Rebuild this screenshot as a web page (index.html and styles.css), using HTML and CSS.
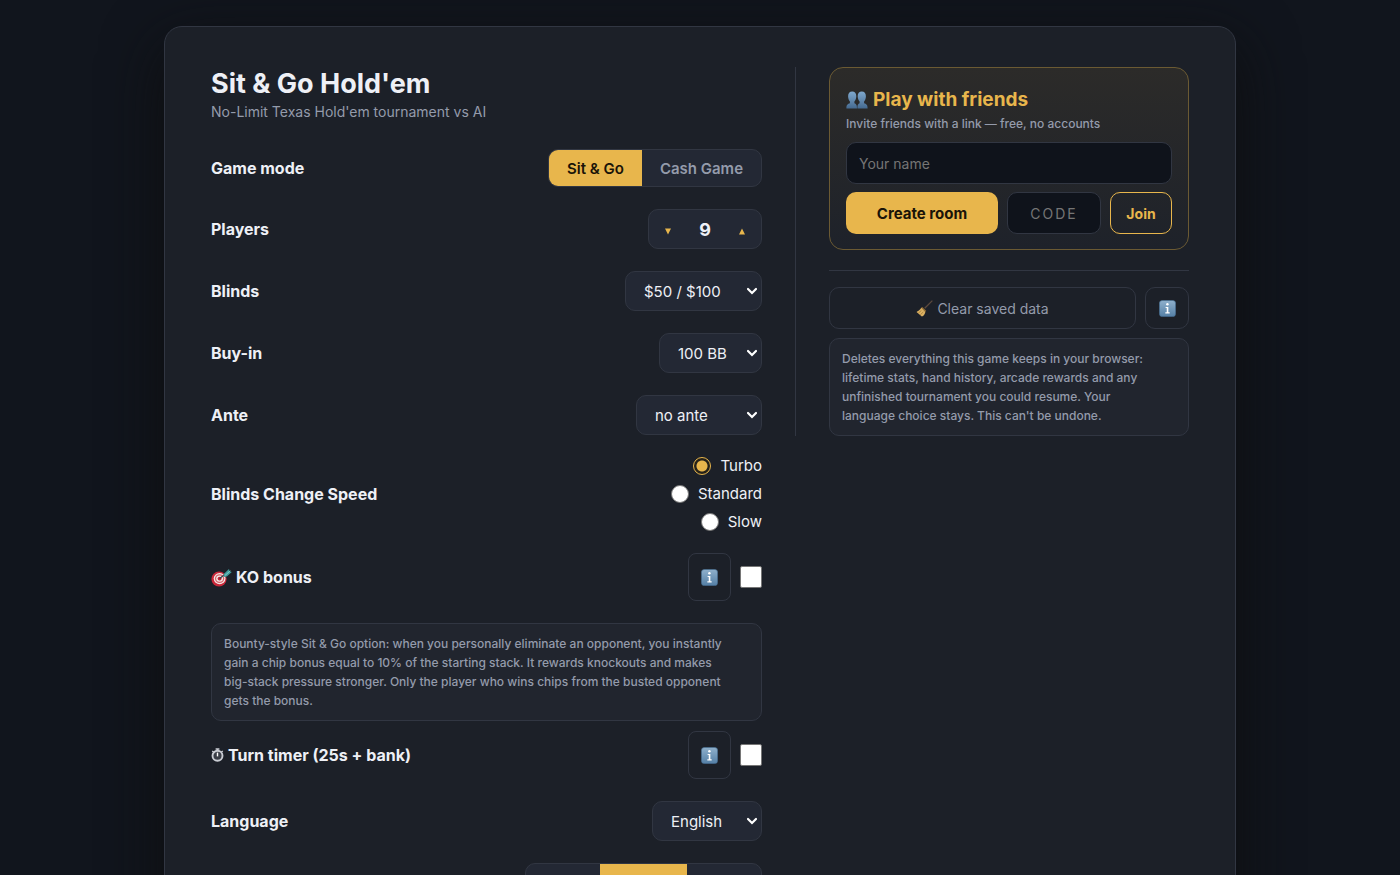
FILE: index.html
```html
<!DOCTYPE html>
<html lang="en">
<head>
    <meta charset="UTF-8">
    <meta name="viewport" content="width=device-width, initial-scale=1.0">
    <title>Sit &amp; Go Hold'em</title>
    <link rel="stylesheet" href="styles.css">
</head>
<body>
    <svg class="sprite" aria-hidden="true">
        <defs>
            <linearGradient id="info-fill" x1="0" y1="0" x2="0" y2="1">
                <stop offset="0" stop-color="#8fb0cc"/>
                <stop offset="1" stop-color="#5580a6"/>
            </linearGradient>
            <linearGradient id="people-fill" x1="0" y1="0" x2="0" y2="1">
                <stop offset="0" stop-color="#7fa8cd"/>
                <stop offset="1" stop-color="#456a90"/>
            </linearGradient>
        </defs>
        <symbol id="icon-info" viewBox="0 0 18 18">
            <rect x="0.5" y="0.5" width="17" height="17" rx="3" fill="url(#info-fill)" stroke="#48739a" stroke-width="0.6"/>
            <circle cx="8.9" cy="4.6" r="1.3" fill="#fff"/>
            <path d="M7 7.300h2.900v5.800h1.400v1.100H6.700v-1.100h1.500V8.400H7z" fill="#fff"/>
        </symbol>
    </svg>

    <main class="overlay">
        <div class="panel">
            <section class="settings">
                <header class="settings-header">
                    <h1>Sit &amp; Go Hold'em</h1>
                    <p>No-Limit Texas Hold'em tournament vs AI</p>
                </header>

                <div class="row">
                    <span class="row-label">Game mode</span>
                    <div class="segment" role="group" aria-label="Game mode">
                        <button type="button" class="active">Sit &amp; Go</button>
                        <button type="button">Cash Game</button>
                    </div>
                </div>

                <div class="row">
                    <span class="row-label">Players</span>
                    <div class="stepper">
                        <button type="button" aria-label="Fewer players"><svg viewBox="0 0 6 7"><path d="M0 0.5h6L3 6.5z"/></svg></button>
                        <output>9</output>
                        <button type="button" aria-label="More players"><svg viewBox="0 0 6 7"><path d="M0 6.5h6L3 0.5z"/></svg></button>
                    </div>
                </div>

                <div class="row">
                    <label class="row-label" for="blinds">Blinds</label>
                    <select id="blinds" class="select select-blinds"><option>$50 / $100</option></select>
                </div>

                <div class="row">
                    <label class="row-label" for="buyin">Buy-in</label>
                    <select id="buyin" class="select select-buyin"><option>100 BB</option></select>
                </div>

                <div class="row">
                    <label class="row-label" for="ante">Ante</label>
                    <select id="ante" class="select select-ante"><option>no ante</option></select>
                </div>

                <div class="row">
                    <span class="row-label">Blinds Change Speed</span>
                    <div class="radios" role="radiogroup" aria-label="Blinds Change Speed">
                        <label><input type="radio" name="speed" checked> Turbo</label>
                        <label><input type="radio" name="speed"> Standard</label>
                        <label><input type="radio" name="speed"> Slow</label>
                    </div>
                </div>

                <div class="row">
                    <label class="row-label" for="ko">
                        <svg class="icon-target" viewBox="0 0 21 19" aria-hidden="true">
                            <ellipse cx="8" cy="11" rx="7.6" ry="7.4" fill="#c9283a"/>
                            <ellipse cx="8.6" cy="10.6" rx="5.9" ry="5.6" fill="#f3e9e6"/>
                            <ellipse cx="8.6" cy="10.6" rx="4.7" ry="4.4" fill="#d8606a"/>
                            <ellipse cx="8.6" cy="10.6" rx="3.4" ry="3.2" fill="#f3e9e6"/>
                            <ellipse cx="8.6" cy="10.6" rx="2" ry="1.9" fill="#c9283a"/>
                            <path d="M8.6 10.6L15 5.6" stroke="#3a4048" stroke-width="1.3"/>
                            <path d="M12.8 6L18 1l.6 2.200 2.200.8-5 4.600-3.200.4z" fill="#3f9c9c"/>
                            <path d="M14 7.4l5.4-4.6" stroke="#8ed3cf" stroke-width="0.8"/>
                        </svg>
                        KO bonus
                    </label>
                    <div class="option">
                        <button type="button" class="info-btn" aria-label="About KO bonus"><svg><use href="#icon-info"/></svg></button>
                        <input type="checkbox" id="ko">
                    </div>
                </div>

                <p class="note">Bounty-style Sit &amp; Go option: when you personally eliminate an opponent, you instantly<br>
                gain a chip bonus equal to 10% of the starting stack. It rewards knockouts and makes<br>
                big-stack pressure stronger. Only the player who wins chips from the busted opponent<br>
                gets the bonus.</p>

                <div class="row">
                    <label class="row-label" for="timer">
                        <svg class="icon-timer" viewBox="0 0 13 14" aria-hidden="true">
                            <circle cx="6.5" cy="7.8" r="5" fill="#3a3e47" stroke="#c9ccd3" stroke-width="1.9"/>
                            <path d="M6.5 4.600v3.800" stroke="#fff" stroke-width="1.400"/>
                            <path d="M4.600 0.900h3.800M6.500 1v2M1.200 3l1.400 1M11.800 3l-1.400 1" stroke="#c9ccd3" stroke-width="1.500"/>
                        </svg>
                        Turn timer (25s + bank)
                    </label>
                    <div class="option">
                        <button type="button" class="info-btn" aria-label="About turn timer"><svg><use href="#icon-info"/></svg></button>
                        <input type="checkbox" id="timer">
                    </div>
                </div>

                <div class="row">
                    <label class="row-label" for="language">Language</label>
                    <select id="language" class="select select-language"><option>English</option></select>
                </div>

                <div class="row row-end">
                    <div class="segment segment-wide" role="group" aria-label="Animation speed">
                        <button type="button" aria-label="Slow"></button>
                        <button type="button" class="active" aria-label="Normal"></button>
                        <button type="button" aria-label="Fast"></button>
                    </div>
                </div>
            </section>

            <aside class="side">
                <form class="friends">
                    <h2>
                        <svg class="icon-people" viewBox="0 0 22 18" aria-hidden="true">
                            <g fill="url(#people-fill)">
                                <path d="M6.200.600c2.600 0 4.100 1.900 4.100 4.700 0 2.200-.800 4.100-1.900 5.100v1.800c1.600.600 2.600 1.400 2.600 5.200H.400c0-3.800 1.400-4.600 3.500-5.200v-1.800C2.800 9.400 2.100 7.500 2.100 5.300 2.100 2.500 3.600.600 6.200.600z"/>
                                <path d="M15.800.600c2.600 0 4.100 1.900 4.100 4.700 0 2.200-.700 4.100-1.800 5.100v1.800c2.100.600 3.500 1.400 3.500 5.200H11.400c0-3.800.800-4.600 2.200-5.200v-1.800c-1.100-1-1.900-2.900-1.900-5.100 0-2.800 1.500-4.700 4.100-4.700z"/>
                            </g>
                        </svg>
                        Play with friends
                    </h2>
                    <p>Invite friends with a link — free, no accounts</p>
                    <input type="text" class="field" placeholder="Your name" aria-label="Your name">
                    <div class="friends-actions">
                        <button type="button" class="btn-create">Create room</button>
                        <input type="text" class="field field-code" placeholder="CODE" aria-label="Room code">
                        <button type="button" class="btn-join">Join</button>
                    </div>
                </form>

                <div class="storage">
                    <div class="storage-actions">
                        <button type="button" class="btn-clear">
                            <svg viewBox="0 0 16 16" aria-hidden="true">
                                <path d="M15.400.600L8.200 7.800" stroke="#5d4a3e" stroke-width="1.200"/>
                                <path d="M6 6.600l3.600 3.500-1 1.400-4-3.900z" fill="#8d6a32"/>
                                <path d="M5 7.400l3.800 3.800c-.400 2-1.700 3.800-3.300 4.300L.500 11.200C1.600 10.900 3.800 9.400 5 7.400z" fill="#dcb162"/>
                                <path d="M2.200 12.400l2.900-2.600M4 14l2.900-2.800" stroke="#9c7635" stroke-width="0.700"/>
                            </svg>
                            Clear saved data
                        </button>
                        <button type="button" class="info-btn info-btn-side" aria-label="About clearing data"><svg><use href="#icon-info"/></svg></button>
                    </div>
                    <p class="note">Deletes everything this game keeps in your browser:<br>
                    lifetime stats, hand history, arcade rewards and any<br>
                    unfinished tournament you could resume. Your<br>
                    language choice stays. This can't be undone.</p>
                </div>
            </aside>
        </div>
    </main>
</body>
</html>
```

FILE: styles.css
```css
:root {
    --bg: #11151d;
    --panel: #1c2028;
    --control: #232834;
    --note: #21252e;
    --field: #0f131b;
    --line: #313642;
    --gold: #e8b64c;
    --text: #eef0f6;
    --muted: #949bab;
}

* {
    box-sizing: border-box;
}

body {
    margin: 0;
    background: var(--bg);
    color: var(--text);
    font-family: Inter, "Liberation Sans", sans-serif;
    font-size: 15px;
}

h1, h2, p {
    margin: 0;
}

button, input, select {
    font: inherit;
    color: inherit;
}

button {
    padding: 0;
    cursor: pointer;
}

.sprite {
    position: absolute;
    width: 0;
    height: 0;
}

.overlay {
    height: 100vh;
    padding: 26px 20px;
    overflow-y: auto;
    scrollbar-width: none;
}

.panel {
    display: flex;
    align-items: flex-start;
    gap: 33px;
    max-width: 1072px;
    margin: 0 auto;
    padding: 40px 46px;
    background: var(--panel);
    border: 1px solid var(--line);
    border-radius: 18px;
    box-shadow: 0 20px 60px rgba(13, 13, 13, 0.9);
}

/* Settings column */
.settings {
    flex: 1;
    display: flex;
    flex-direction: column;
    gap: 22px;
}

.settings-header {
    margin-bottom: 6px;
}

.settings-header h1 {
    font-size: 27px;
    line-height: 34px;
    font-weight: 700;
}

.settings-header p {
    margin-top: 2px;
    font-size: 14px;
    line-height: 18px;
    color: var(--muted);
}

.row {
    display: flex;
    align-items: center;
    justify-content: space-between;
}

.row-end {
    justify-content: flex-end;
}

.row-label {
    display: flex;
    align-items: center;
    gap: 4px;
    font-size: 16px;
    font-weight: 700;
}

.icon-target {
    width: 21px;
    height: 19px;
}

.icon-timer {
    width: 13px;
    height: 14px;
}

.segment {
    display: flex;
    height: 38px;
    background: var(--control);
    border: 1px solid var(--line);
    border-radius: 10px;
    overflow: hidden;
}

.segment button {
    padding: 0 18px;
    background: none;
    border: none;
    color: var(--muted);
    font-weight: 600;
}

.segment .active {
    background: var(--gold);
    color: #1a1408;
}

.segment-wide {
    width: 237px;
}

.segment-wide button {
    flex: 3;
}

.segment-wide .active {
    flex: 4;
}

.stepper {
    display: flex;
    align-items: center;
    width: 114px;
    height: 40px;
    background: var(--control);
    border: 1px solid var(--line);
    border-radius: 10px;
}

.stepper button {
    width: 38px;
    height: 38px;
    background: none;
    border: none;
}

.stepper svg {
    width: 6px;
    height: 7px;
    fill: var(--gold);
}

.stepper output {
    flex: 1;
    text-align: center;
    font-size: 18px;
    font-weight: 700;
}

.select {
    appearance: none;
    height: 40px;
    padding: 0 20px 0 18px;
    background: var(--control) url("data:image/svg+xml,%3Csvg xmlns='http://www.w3.org/2000/svg' width='12' height='8' viewBox='0 0 12 8'%3E%3Cpath d='M2 2l4 4 4-4' fill='none' stroke='%23fff' stroke-width='2.2' stroke-linecap='round'/%3E%3C/svg%3E") no-repeat right 3px center;
    border: 1px solid var(--line);
    border-radius: 10px;
}

.select-blinds {
    width: 137px;
}

.select-buyin {
    width: 103px;
}

.select-ante {
    width: 126px;
}

.select-language {
    width: 110px;
}

.radios {
    display: flex;
    flex-direction: column;
    align-items: flex-end;
    gap: 10px;
}

.radios label {
    display: flex;
    align-items: center;
    gap: 9px;
    line-height: 18px;
}

.radios input {
    appearance: none;
    width: 18px;
    height: 18px;
    margin: 0;
    background: #fff;
    border: 1px solid #767676;
    border-radius: 50%;
}

.radios input:checked {
    background: radial-gradient(circle, var(--gold) 5px, #262219 6px);
    border: 1px solid var(--gold);
}

.option {
    display: flex;
    align-items: center;
    gap: 9px;
}

.option input {
    appearance: none;
    width: 22px;
    height: 22px;
    margin: 0;
    background: #fff;
    border: 1px solid #767676;
    border-radius: 2px;
}

.info-btn {
    display: flex;
    align-items: center;
    justify-content: center;
    width: 43px;
    height: 48px;
    background: none;
    border: 1px solid var(--line);
    border-radius: 8px;
}

.info-btn svg {
    width: 17px;
    height: 17px;
}

.note {
    padding: 10px 12px;
    background: var(--note);
    border: 1px solid var(--line);
    border-radius: 10px;
    color: var(--muted);
    font-size: 12px;
    font-weight: 500;
    line-height: 19px;
}

.settings .note {
    margin-bottom: -12px;
}

/* Side column */
.side {
    width: 394px;
    padding-left: 33px;
    border-left: 1px solid var(--line);
}

.friends {
    padding: 20px 16px 15px;
    background: linear-gradient(180deg, #2c2b29, #1e222a);
    border: 1px solid #6b5a33;
    border-radius: 14px;
}

.friends h2 {
    display: flex;
    align-items: center;
    gap: 5px;
    color: var(--gold);
    font-size: 19px;
    line-height: 24px;
    font-weight: 700;
}

.icon-people {
    width: 22px;
    height: 18px;
}

.friends p {
    margin: 3px 0 9px;
    color: var(--muted);
    font-size: 12px;
    font-weight: 500;
    line-height: 18px;
}

.field {
    display: block;
    width: 100%;
    height: 42px;
    padding: 0 12px;
    background: var(--field);
    border: 1px solid var(--line);
    border-radius: 10px;
    font-size: 14px;
}

.field::placeholder {
    color: #757575;
}

.friends-actions {
    display: flex;
    gap: 9px;
    margin-top: 8px;
}

.field-code {
    width: 94px;
    text-align: center;
    letter-spacing: 2px;
}

.btn-create {
    flex: 1;
    background: var(--gold);
    border: none;
    border-radius: 10px;
    color: #1a1408;
    font-weight: 700;
}

.btn-join {
    width: 62px;
    background: none;
    border: 1px solid var(--gold);
    border-radius: 10px;
    color: var(--gold);
    font-size: 14px;
    font-weight: 700;
}

.storage {
    margin-top: 20px;
    padding-top: 16px;
    border-top: 1px solid var(--line);
}

.storage-actions {
    display: flex;
    gap: 9px;
    height: 42px;
    margin-bottom: 9px;
}

.btn-clear {
    flex: 1;
    display: flex;
    align-items: center;
    justify-content: center;
    gap: 4px;
    background: none;
    border: 1px solid var(--line);
    border-radius: 10px;
    color: var(--muted);
    font-size: 14px;
}

.btn-clear svg {
    width: 17px;
    height: 17px;
    fill: none;
}

.info-btn-side {
    width: 44px;
    height: 42px;
    border-radius: 10px;
}
```
